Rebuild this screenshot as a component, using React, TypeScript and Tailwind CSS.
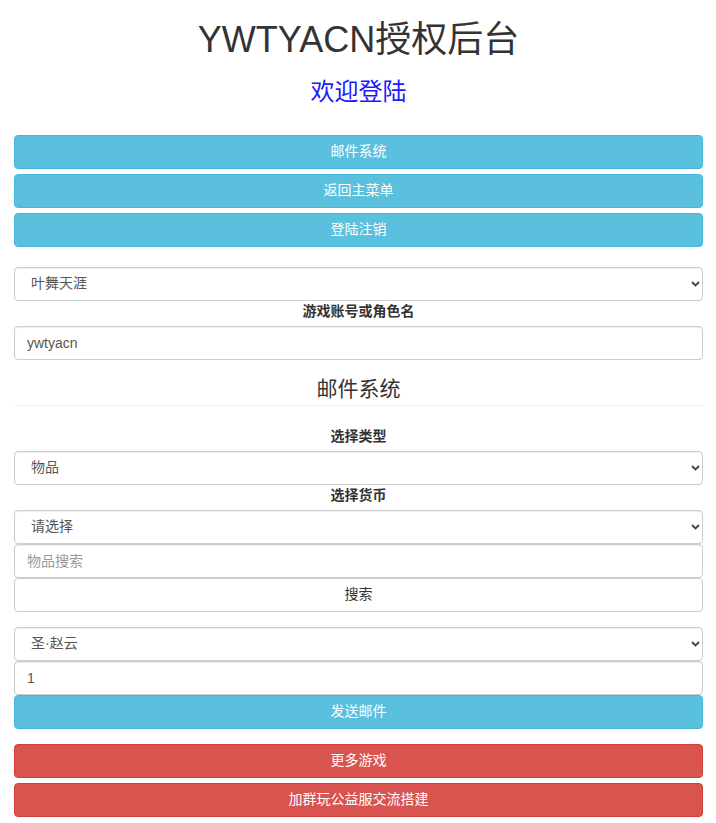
import React from "react";

const font = { fontFamily: '"Liberation Sans", "Noto Sans CJK SC", sans-serif' };

const Chevron = () => (
  <svg
    className="pointer-events-none absolute right-[3px] top-1/2 -translate-y-1/2"
    width="9"
    height="6"
    viewBox="0 0 9 6"
    fill="none"
  >
    <path d="M1 1l3.5 3.5L8 1" stroke="#444" strokeWidth="1.8" />
  </svg>
);

const Select = ({ value }: { value: string }) => (
  <div className="relative">
    <select
      defaultValue={value}
      className="h-[34px] w-full appearance-none rounded-[4px] border border-[#ccc] bg-white pl-[16px] pr-6 text-[14px] text-[#555] shadow-[inset_0_1px_1px_rgba(0,0,0,0.075)] outline-none"
    >
      <option>{value}</option>
    </select>
    <Chevron />
  </div>
);

const Input = ({ value, placeholder }: { value?: string; placeholder?: string }) => (
  <input
    defaultValue={value}
    placeholder={placeholder}
    className="block h-[34px] w-full rounded-[4px] border border-[#ccc] bg-white px-[12px] text-[14px] text-[#555] shadow-[inset_0_1px_1px_rgba(0,0,0,0.075)] outline-none placeholder:text-[#999]"
  />
);

const Btn = ({ children, color }: { children: React.ReactNode; color: "info" | "danger" | "default" }) => {
  const cls =
    color === "info"
      ? "border-[#46b8da] bg-[#5bc0de] text-white"
      : color === "danger"
        ? "border-[#d43f3a] bg-[#d9534f] text-white"
        : "border-[#ccc] bg-white text-[#333]";
  return (
    <button className={`block h-[34px] w-full rounded-[4px] border text-center text-[14px] ${cls}`}>
      {children}
    </button>
  );
};

const Label = ({ children }: { children: React.ReactNode }) => (
  <label className="mb-[5px] block text-center text-[14px] leading-[20px] font-bold text-[#333]">
    {children}
  </label>
);

export default function App() {
  return (
    <div style={font} className="min-h-[823px] bg-white pl-[14px] pr-[13px] text-[#333]">
      <h1 className="pt-[20px] text-center text-[36px] leading-[1.1] font-normal text-[#333]">
        YWTYACN授权后台
      </h1>
      <h3 className="mt-[19px] text-center text-[24px] leading-[1.1] font-normal text-[#1a1aff]">
        欢迎登陆
      </h3>

      <div className="mt-[30px] flex flex-col gap-[5px]">
        <Btn color="info">邮件系统</Btn>
        <Btn color="info">返回主菜单</Btn>
        <Btn color="info">登陆注销</Btn>
      </div>

      <div className="mt-[20px]">
        <Select value="叶舞天涯" />
        <Label>游戏账号或角色名</Label>
        <Input value="ywtyacn" />
      </div>

      {/* section header */}
      <h4 className="mt-[17px] border-b border-[#eee] pb-[5px] text-center text-[21px] leading-[23px] font-normal text-[#333]">
        邮件系统
      </h4>

      <div className="mt-[20px]">
        <Label>选择类型</Label>
        <Select value="物品" />
        <Label>选择货币</Label>
        <Select value="请选择" />
        <Input placeholder="物品搜索" />
        <Btn color="default">搜索</Btn>
      </div>

      <div className="mt-[15px]">
        <Select value="圣·赵云" />
        <Input value="1" />
        <Btn color="info">发送邮件</Btn>
      </div>

      <div className="mt-[15px] flex flex-col gap-[5px]">
        <Btn color="danger">更多游戏</Btn>
        <Btn color="danger">加群玩公益服交流搭建</Btn>
      </div>
    </div>
  );
}
